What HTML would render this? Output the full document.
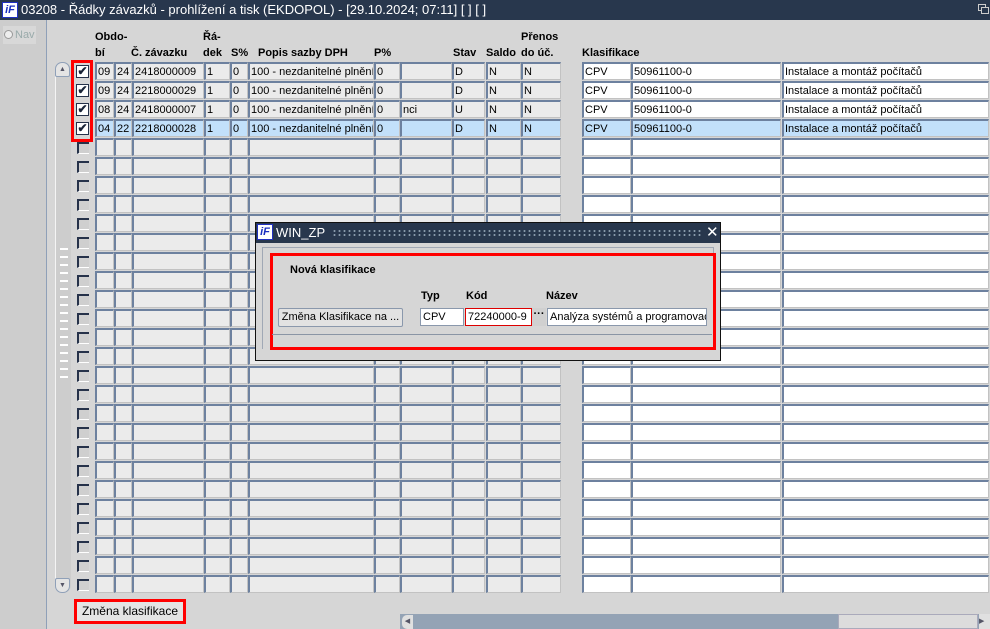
<!DOCTYPE html>
<html><head><meta charset="utf-8"><style>
*{box-sizing:border-box;margin:0;padding:0}
body{width:990px;height:629px;overflow:hidden;background:#d6d6d6;font-family:"Liberation Sans",Arial,sans-serif;font-size:11px;color:#000;position:relative}
.a{position:absolute}
.tb{left:0;top:0;width:990px;height:20px;background:#28374d;color:#fff;font-size:13px;line-height:20px}
.logo{position:absolute;width:16px;height:16px;background:#fff;border:1px solid #2030c0;color:#1a2fc0;font:italic bold 11px "Liberation Sans",sans-serif;line-height:14px;text-align:center}
.h{position:absolute;font-weight:bold;font-size:11px;line-height:16px}
.c{position:absolute;height:18px;background:#ebebeb;border-top:2px solid #6d819f;border-left:2px solid #6d819f;border-right:1px solid #c2c2c2;border-bottom:1px solid #c2c2c2;line-height:15px;padding-top:1px;padding-left:1px;white-space:nowrap;overflow:hidden}
.w{background:#fff}
.s{background:#c2e0fa}
.cb{position:absolute;width:12px;height:12px;border-top:2px solid #26324a;border-left:2px solid #26324a;border-bottom:1px solid #fff;background:#cfcfcf}
.ck{background:#fff;border:1px solid #26324a}
.btn{position:absolute;background:#e2e2e2;border:1px solid #8a98ac;border-radius:2px;text-align:center}
</style></head><body>
<div class="a tb"><div class="logo" style="left:2px;top:2px">iF</div><span style="position:absolute;left:21px">03208 - Řádky závazků - prohlížení a tisk (EKDOPOL) - [29.10.2024; 07:11] [ ] [ ]</span>
<div class="a" style="left:978px;top:4px;width:8px;height:7px;border:1px solid #ccc"></div><div class="a" style="left:981px;top:7px;width:8px;height:7px;border:1px solid #ccc;background:#28374d"></div></div>
<div class="a" style="left:0;top:20px;width:47px;height:609px;background:#cdcdcd;border-right:1px solid #8fa0b8"></div>
<div class="a" style="left:3px;top:26px;width:33px;height:18px;background:#d8d8d8;color:#9aa;line-height:18px;font-size:11px"><span style="display:inline-block;width:9px;height:9px;border-radius:50%;border:1px solid #999;background:#eee;margin:0 2px 0 1px;vertical-align:-1px"></span>Nav</div>
<div class="h" style="left:95px;top:29px">Obdo-<br>bí</div>
<div class="h" style="left:131px;top:45px">Č. závazku</div>
<div class="h" style="left:203px;top:29px">Řá-<br>dek</div>
<div class="h" style="left:231px;top:45px">S%</div>
<div class="h" style="left:258px;top:45px">Popis sazby DPH</div>
<div class="h" style="left:374px;top:45px">P%</div>
<div class="h" style="left:453px;top:45px">Stav</div>
<div class="h" style="left:486px;top:45px">Saldo</div>
<div class="h" style="left:521px;top:29px">Přenos<br>do úč.</div>
<div class="h" style="left:582px;top:45px">Klasifikace</div>
<div class="a" style="left:55px;top:62px;width:16px;height:531px;background:#cdcdcd;border-left:1px solid #f4f4f4;border-radius:8px"></div>
<div class="a" style="left:55px;top:62px;width:15px;height:15px;border-radius:7px 7px 2px 2px;background:#e4e4e4;border:1px solid #8fa0b8;font-size:7px;text-align:center;line-height:13px;color:#556">▲</div>
<div class="a" style="left:55px;top:578px;width:15px;height:15px;border-radius:2px 2px 7px 7px;background:#e4e4e4;border:1px solid #8fa0b8;font-size:7px;text-align:center;line-height:13px;color:#556">▼</div>
<div class="a" style="left:60px;top:245px;width:8px;height:135px;background:repeating-linear-gradient(#cdcdcd 0 3px,#fff 3px 5px,#cdcdcd 5px 8px)"></div>
<div id="g"></div>
<div class="a" style="left:71px;top:60px;width:22px;height:82px;border:3px solid #f00"></div>
<div class="a" style="left:74px;top:599px;width:112px;height:25px;border:3px solid #f00;text-align:center;line-height:19px;font-size:12px;background:#e4e4e4">Změna klasifikace</div>
<div class="a" style="left:400px;top:614px;width:590px;height:15px;background:#94a3b5"></div>
<div class="a" style="left:402px;top:615px;width:11px;height:14px;background:#e0e0e0;border-radius:5px 0 0 5px;font-size:7px;line-height:14px;color:#556;text-align:center">◀</div>
<div class="a" style="left:838px;top:614px;width:140px;height:15px;background:#dcdcdc;border:1px solid #aab"></div>
<div class="a" style="left:979px;top:614px;width:11px;height:15px;background:#e0e0e0;font-size:7px;line-height:15px;color:#556">▶</div>
<div class="a" style="left:255px;top:222px;width:466px;height:139px;background:#d6d6d6;border:1px solid #111"></div>
<div class="a" style="left:256px;top:223px;width:464px;height:20px;background:#28374d;color:#fff;font-size:13px;line-height:20px"><div class="logo" style="left:1px;top:1px">iF</div><span style="position:absolute;left:20px">WIN_ZP</span>
<div class="a" style="left:76px;top:6px;width:370px;height:8px;background:radial-gradient(circle,#8899aa 0.8px,transparent 1.2px) 0 0/5px 4px"></div>
<span style="position:absolute;left:450px;top:0;font-size:15px">✕</span></div>
<div class="a" style="left:262px;top:247px;width:452px;height:102px;border:1px solid #a0a8b5;border-bottom:none"></div>
<div class="a" style="left:270px;top:253px;width:446px;height:97px;border:3px solid #f00"></div>
<div class="a" style="left:272px;top:334px;width:440px;height:1px;background:#8a95a5"></div>
<div class="h" style="left:290px;top:262px">Nová klasifikace</div>
<div class="h" style="left:421px;top:288px">Typ</div>
<div class="h" style="left:466px;top:288px">Kód</div>
<div class="h" style="left:546px;top:288px">Název</div>
<div class="btn" style="left:278px;top:308px;width:125px;height:19px;line-height:17px">Změna Klasifikace na ...</div>
<div class="a" style="left:420px;top:308px;width:44px;height:18px;background:#fff;border:1px solid #8a98ac;padding-left:2px;line-height:16px">CPV</div>
<div class="a" style="left:465px;top:308px;width:67px;height:18px;background:#fff;border:1px solid #d00;padding-left:2px;line-height:16px">72240000-9</div>
<div class="a" style="left:532px;top:308px;width:14px;height:18px;background:#d0d0d0;text-align:center;line-height:12px;font-weight:bold">···</div>
<div class="a" style="left:547px;top:308px;width:160px;height:18px;background:#fff;border:1px solid #8a98ac;padding-left:2px;line-height:16px;overflow:hidden;white-space:nowrap">Analýza systémů a programovac</div>
<script>
var cols=[[95,19],[114,18],[132,72],[204,26],[230,18],[248,126],[374,26],[400,52],[452,33],[486,35],[521,40],[582,49,1],[631,150,1],[782,207,1]];
var data=[["09","24","2418000009","1","0","100 - nezdanitelné plnění","0","","D","N","N","CPV","50961100-0","Instalace a montáž počítačů"],
["09","24","2218000029","1","0","100 - nezdanitelné plnění","0","","D","N","N","CPV","50961100-0","Instalace a montáž počítačů"],
["08","24","2418000007","1","0","100 - nezdanitelné plnění","0","nci","U","N","N","CPV","50961100-0","Instalace a montáž počítačů"],
["04","22","2218000028","1","0","100 - nezdanitelné plnění","0","","D","N","N","CPV","50961100-0","Instalace a montáž počítačů"]];
var h="";
for(var r=0;r<28;r++){var y=62+r*19;var d=data[r];
if(r<4){h+='<div class="cb ck" style="left:76px;top:'+(y+3)+'px;width:13px;height:13px;font-size:12px;line-height:10px;text-align:center;font-weight:bold;color:#1a2438">✔</div>';}
else h+='<div class="cb" style="left:77px;top:'+(y+4)+'px"></div>';
for(var i=0;i<cols.length;i++){var c=cols[i];var cl="c";if(c[2])cl+=" w";if(r==3)cl+=" s";
h+='<div class="'+cl+'" style="left:'+c[0]+'px;top:'+y+'px;width:'+c[1]+'px">'+(d?d[i]:"")+'</div>';}}
document.getElementById("g").innerHTML=h;
</script>
</body></html>
